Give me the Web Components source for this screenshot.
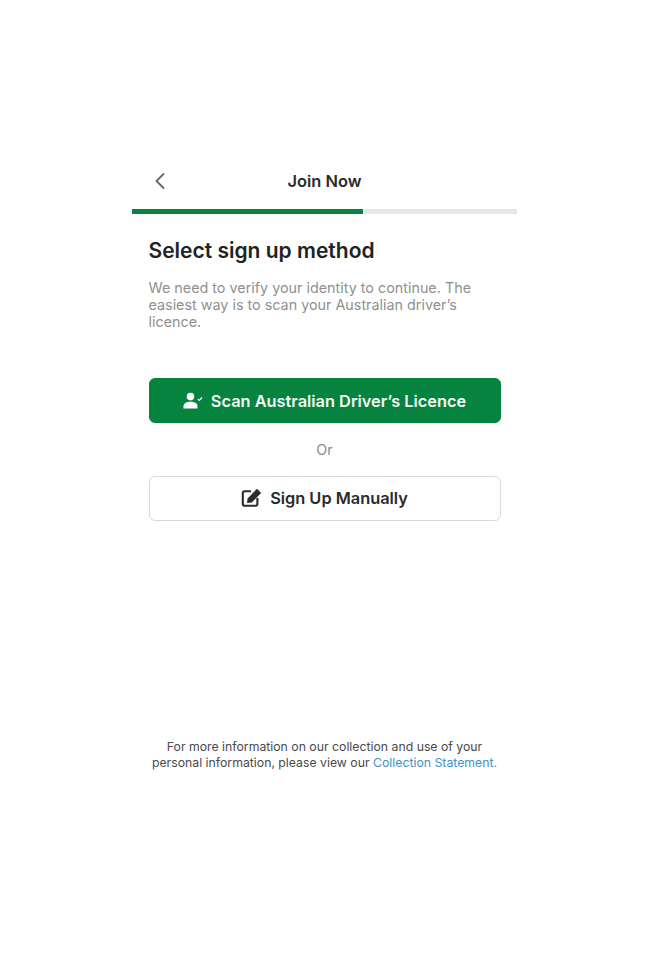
<!DOCTYPE html>
<html>
<head>
<meta charset="utf-8">
<title>Join Now</title>
<style>
  html, body { margin: 0; padding: 0; background: #fff; }
  body { font-family: Inter, "Liberation Sans", sans-serif; }
</style>
</head>
<body>
<signup-page>
  <signup-header slot="header" progress="60">Join Now</signup-header>
  <h2 slot="title">Select sign up method</h2>
  <p slot="intro">We need to verify your identity to continue. The easiest way is to scan your Australian driver’s licence.</p>
  <signup-button slot="actions" kind="primary" icon="scan">Scan Australian Driver’s Licence</signup-button>
  <span slot="actions" class="or">Or</span>
  <signup-button slot="actions" icon="edit">Sign Up Manually</signup-button>
  <signup-notice slot="footer">For more information on our collection and use of your<br>personal information, please view our <a>Collection Statement.</a></signup-notice>
</signup-page>

<script>
class signupPage extends HTMLElement {
  constructor() {
    super();
    this.shadowDOM = this.attachShadow({mode: 'open'});
    this.shadowDOM.innerHTML = `
<style>
  :host { display: block; width: 653px; height: 953px; box-sizing: border-box; padding: 159px 136px 0 132px; overflow: hidden; }
  .content { display: flex; flex-direction: column; padding: 0 16.5px; }
  ::slotted(h2) { margin: 24px 0 0; font: 600 21px/26px Inter, "Liberation Sans", sans-serif; color: #222; }
  ::slotted(p) { margin: 15px 0 0; font: 400 14.35px/17px Inter, "Liberation Sans", sans-serif; color: #909090; }
  .actions { display: flex; flex-direction: column; align-items: stretch; margin-top: 48px; }
  ::slotted(.or) { text-align: center; font: 400 14.35px/17px Inter, "Liberation Sans", sans-serif; color: #8b8b8b; margin: 18px 0 17.5px; }
  .footer { margin-top: 218.5px; }
</style>
<slot name="header"></slot>
<div class="content">
  <slot name="title"></slot>
  <slot name="intro"></slot>
  <div class="actions"><slot name="actions"></slot></div>
</div>
<div class="footer"><slot name="footer"></slot></div>`;
  }
}
customElements.define('signup-page', signupPage);

class signupHeader extends HTMLElement {
  constructor() {
    super();
    this.shadowDOM = this.attachShadow({mode: 'open'});
  }
  connectedCallback() {
    const progress = this.getAttribute('progress') || 0;
    this.shadowDOM.innerHTML = `
<style>
  :host { display: block; }
  .bar { display: grid; grid-template-columns: 56px 1fr 56px; align-items: center; box-sizing: border-box; height: 50px; padding-bottom: 6px; }
  .back { display: flex; justify-content: center; margin-left: -1px; }
  .title { text-align: center; font: 600 16.4px/20px Inter, "Liberation Sans", sans-serif; color: #2a2a2a; }
  .track { height: 5px; background: #e6e6e6; }
  .fill { height: 100%; width: ${progress}%; background: #06843f; }
</style>
<div class="bar">
  <div class="back">
    <svg width="12" height="18" viewBox="0 0 12 18" fill="none" stroke="#666" stroke-width="1.8" stroke-linecap="round" stroke-linejoin="round"><path d="M9.5 2 L2.5 9 L9.5 16"/></svg>
  </div>
  <div class="title"><slot></slot></div>
  <div></div>
</div>
<div class="track"><div class="fill"></div></div>`;
  }
}
customElements.define('signup-header', signupHeader);

const icons = {
  scan: `<svg width="20" height="18" viewBox="0 0 20 18" fill="#fff"><circle cx="7.5" cy="4.6" r="3.8"/><path d="M0.5 16.5 v-2.2 c0-3 2.6-4.6 7-4.6 s7 1.6 7 4.6 v2.2 z"/><path d="M14.8 7 l1.5 1.5 l2.8-3" fill="none" stroke="#fff" stroke-width="1.1"/></svg>`,
  edit: `<svg width="21" height="20" viewBox="0 0 21 20" fill="none"><path d="M10 3.2 H3.6 a1.8 1.8 0 0 0 -1.8 1.8 V16 a1.8 1.8 0 0 0 1.8 1.8 H14.6 a1.8 1.8 0 0 0 1.8 -1.8 V10" stroke="#2c2c2c" stroke-width="2.1"/><path d="M6.6 10.4 L16 0.8 L20.2 5 L10.8 14.4 L6 15 z" fill="#2c2c2c"/></svg>`
};

class signupButton extends HTMLElement {
  constructor() {
    super();
    this.shadowDOM = this.attachShadow({mode: 'open'});
  }
  connectedCallback() {
    this.shadowDOM.innerHTML = `
<style>
  :host { display: block; }
  .btn { display: flex; align-items: center; justify-content: center; gap: 8px; box-sizing: border-box; height: 45px; border-radius: 6px;
         background: #fff; border: 1.5px solid #d9d9d9; color: #2a2a2a; font: 600 16.35px/20px Inter, "Liberation Sans", sans-serif; }
  :host([kind=primary]) .btn { background: #06843f; border-color: #06843f; color: #f4f8f5; }
  svg { display: block; }
</style>
<div class="btn">${icons[this.getAttribute('icon')] || ''}<span><slot></slot></span></div>`;
  }
}
customElements.define('signup-button', signupButton);

class signupNotice extends HTMLElement {
  constructor() {
    super();
    this.shadowDOM = this.attachShadow({mode: 'open'});
    this.shadowDOM.innerHTML = `
<style>
  :host { display: block; text-align: center; font: 400 12.27px/16px Inter, "Liberation Sans", sans-serif; color: #4a4a4a; }
  ::slotted(a) { color: #3b93c9; }
</style>
<slot></slot>`;
  }
}
customElements.define('signup-notice', signupNotice);
</script>
</body>
</html>
